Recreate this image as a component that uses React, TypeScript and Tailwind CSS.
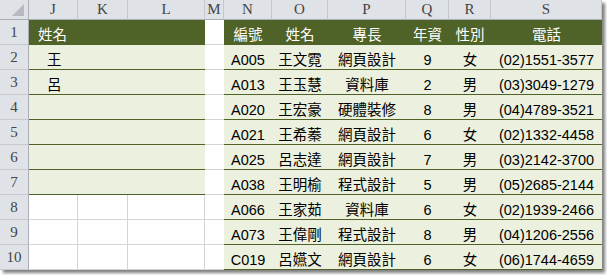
import React from 'react';

const DARK = 'bg-[#4f6228]';
const LIGHT = 'bg-[#ebf1de]';

const letters = ['J', 'K', 'L', 'M', 'N', 'O', 'P', 'Q', 'R', 'S'];

const people = [
  ['A005', '王文霓', '網頁設計', '9', '女', '(02)1551-3577'],
  ['A013', '王玉慧', '資料庫', '2', '男', '(03)3049-1279'],
  ['A020', '王宏豪', '硬體裝修', '8', '男', '(04)4789-3521'],
  ['A021', '王希蓁', '網頁設計', '6', '女', '(02)1332-4458'],
  ['A025', '呂志達', '網頁設計', '7', '男', '(03)2142-3700'],
  ['A038', '王明榆', '程式設計', '5', '男', '(05)2685-2144'],
  ['A066', '王家茹', '資料庫', '6', '女', '(02)1939-2466'],
  ['A073', '王偉剛', '程式設計', '8', '男', '(04)1206-2556'],
  ['C019', '呂嬿文', '網頁設計', '6', '女', '(06)1744-4659'],
];

const headers = ['編號', '姓名', '專長', '年資', '性別', '電話'];
const leftNames = ['王', '呂', '', '', '', ''];

const cell = 'flex items-end justify-center leading-[18px] whitespace-nowrap';

export default function App() {
  return (
    <div className="w-[607px] h-[275px] bg-white overflow-hidden">
      <div
        className="w-[602px] h-[270px] grid grid-cols-[29px_49px_50px_77px_19px_48px_56px_78px_43px_42px_111px] grid-rows-[20px_repeat(10,25px)] shadow-[3px_3px_3px_rgba(0,0,0,0.5)] text-[14.5px] text-black"
        style={{ fontFamily: '"Liberation Sans", "Noto Sans CJK TC", sans-serif' }}
      >
        {/* corner */}
        <div className="bg-[#dfe3e8] border-r border-b border-[#abafb5] flex items-end justify-end pr-[4px] pb-[3px]">
          <svg width="12" height="12" viewBox="0 0 12 12">
            <polygon points="12,0 12,12 0,12" fill="#b7bbc1" />
          </svg>
        </div>
        {letters.map((l) => (
          <div
            key={l}
            className="bg-[#dfe3e8] border-r border-b border-r-[#c4c8ce] border-b-[#abafb5] flex items-center justify-center text-[15px] text-[#444] font-['Liberation_Serif',serif]"
          >
            {l}
          </div>
        ))}

        {Array.from({ length: 10 }, (_, i) => {
          const r = i + 1;
          const head = r === 1;
          const rowBg = head ? DARK : LIGHT;
          const textCls = head ? 'text-white' : 'text-black';
          return (
            <React.Fragment key={r}>
              <div className="bg-[#dfe3e8] border-r border-b border-r-[#abafb5] border-b-[#c6cad0] flex items-end justify-center pb-[1px] text-[15px] text-[#444] font-['Liberation_Serif',serif]">
                {r}
              </div>

              {r <= 7 ? (
                <div className={`col-span-3 ${rowBg} border-b border-[#4f6228] ${cell} !justify-start ${textCls} ${head ? 'pl-[9px]' : 'pl-[18px]'}`}>
                  {head ? '姓名' : leftNames[i - 1]}
                </div>
              ) : (
                <>
                  <div className="border-r border-b border-[#d4d4d4]" />
                  <div className="border-r border-b border-[#d4d4d4]" />
                  <div className="border-r border-b border-[#d4d4d4]" />
                </>
              )}

              <div className="bg-white border-b border-[#d4d4d4]" />

              {(head ? headers : people[i - 1]).map((v, c) => (
                <div key={c} className={`${rowBg} border-b border-[#4f6228] ${cell} ${textCls}`}>
                  {v}
                </div>
              ))}
            </React.Fragment>
          );
        })}
      </div>
    </div>
  );
}
